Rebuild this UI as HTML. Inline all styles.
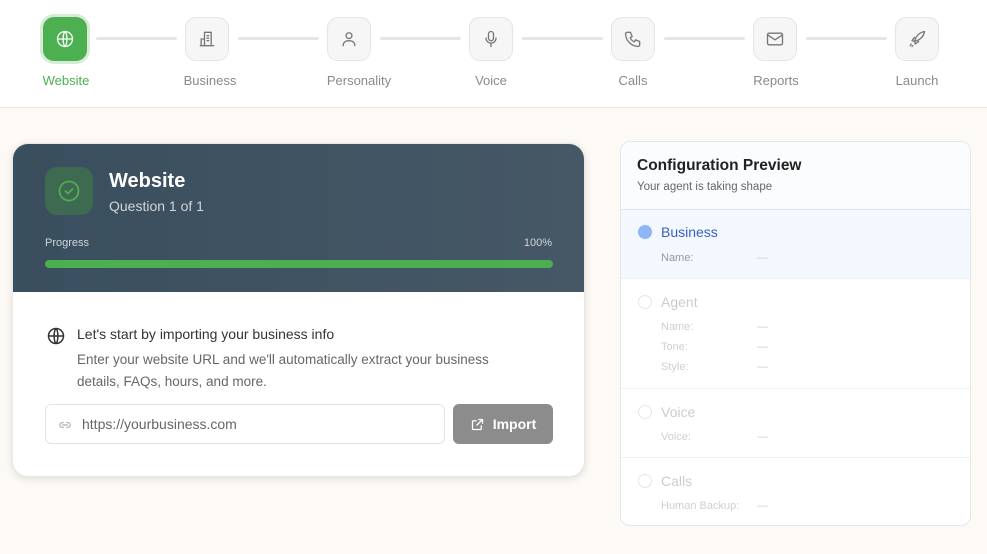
<!DOCTYPE html>
<html><head><meta charset="utf-8"><style>
*{margin:0;padding:0;box-sizing:border-box}
body{width:987px;height:554px;overflow:hidden;background:#fdfaf5;font-family:"Liberation Sans",sans-serif;position:relative}
.top{position:absolute;left:0;top:0;width:987px;height:108px;background:#fff;border-bottom:1px solid #ece9e4}
.st{position:absolute;top:17px;width:44px;height:44px;border-radius:11px;background:#f6f6f6;border:1px solid #e4e4e4;display:flex;align-items:center;justify-content:center}
.st svg{width:20px;height:20px;fill:none;stroke:#777;stroke-width:1.6;stroke-linecap:round;stroke-linejoin:round}
.st.a{background:#4caf50;border:none;box-shadow:0 0 0 3px #d7ecd6}
.st.a svg{stroke:#fff}
.ln{position:absolute;top:37px;height:3px;width:81px;background:#e6e6e6;border-radius:2px}
.lb{position:absolute;top:73px;width:120px;text-align:center;font-size:13px;color:#8a8a8a}
.card{position:absolute;left:12px;top:143px;width:573px;height:334px;border-radius:16px;background:#fff;box-shadow:0 2px 8px rgba(0,0,0,.12);border:1px solid #e8e8e8;overflow:hidden}
.hd{position:absolute;left:0;top:0;width:100%;height:148px;background:linear-gradient(90deg,#394e5e,#465866)}
.rc{position:absolute;left:620px;top:141px;width:351px;height:385px;border:1px solid #e3e6ea;border-radius:10px;background:#fff;overflow:hidden}
.sec{position:absolute;left:0;width:100%;border-top:1px solid #eef0f2}
.dot{position:absolute;left:17px;width:14px;height:14px;border-radius:50%;border:1.5px solid #e6e6e6}
.sn{position:absolute;left:40px;font-size:14px;color:#ccc}
.kv{position:absolute;left:40px;font-size:11px;color:#cfcfcf}
.kv span{position:absolute;left:96px}
</style></head><body>
<div class="top">
<div class="st a" style="left:43px"><svg viewBox="0 0 24 24"><circle cx="12" cy="12" r="9"/><path d="M3 12h18M12 3c3 3 3 15 0 18M12 3c-3 3-3 15 0 18"/></svg></div>
<div class="ln" style="left:96px"></div>
<div class="st" style="left:185px"><svg viewBox="0 0 24 24"><path d="M9 20V4h8v16M5 20v-8h4M4 20h16M12 8h2M12 11h2M12 14h2"/></svg></div>
<div class="ln" style="left:238px"></div>
<div class="st" style="left:327px"><svg viewBox="0 0 24 24"><circle cx="12" cy="8" r="3.5"/><path d="M5 20c0-4 3-6 7-6s7 2 7 6"/></svg></div>
<div class="ln" style="left:380px"></div>
<div class="st" style="left:469px"><svg viewBox="0 0 24 24"><rect x="9" y="3" width="6" height="11" rx="3"/><path d="M6 11a6 6 0 0012 0M12 17v4"/></svg></div>
<div class="ln" style="left:522px"></div>
<div class="st" style="left:611px"><svg viewBox="0 0 24 24"><path d="M5 4h4l2 5-2.5 1.5a11 11 0 005 5L15 13l5 2v4a2 2 0 01-2 2A16 16 0 013 6a2 2 0 012-2"/></svg></div>
<div class="ln" style="left:664px"></div>
<div class="st" style="left:753px"><svg viewBox="0 0 24 24"><rect x="3" y="5" width="18" height="14" rx="2"/><path d="M3 7l9 6 9-6"/></svg></div>
<div class="ln" style="left:806px"></div>
<div class="st" style="left:895px"><svg viewBox="0 0 24 24"><path d="M9 15c2-7 6-11 12-12-1 6-5 10-12 12zM9 15l-3-1 3-4M9 15l1 3 4-3M5 18l-1 2M7 20l-1 1"/></svg></div>
<div class="lb" style="left:6px;color:#4caf50">Website</div>
<div class="lb" style="left:150px">Business</div>
<div class="lb" style="left:299px">Personality</div>
<div class="lb" style="left:431px">Voice</div>
<div class="lb" style="left:573px">Calls</div>
<div class="lb" style="left:716px">Reports</div>
<div class="lb" style="left:857px">Launch</div>
</div>

<div class="card">
<div class="hd">
<div style="position:absolute;left:32px;top:23px;width:48px;height:48px;border-radius:12px;background:#3f6a52;display:flex;align-items:center;justify-content:center"><svg width="24" height="24" viewBox="0 0 24 24" fill="none" stroke="#4caf50" stroke-width="1.8" stroke-linecap="round" stroke-linejoin="round"><circle cx="12" cy="12" r="9.5"/><path d="M8.5 12l2.5 2.5 4.5-4.5"/></svg></div>
<div style="position:absolute;left:96px;top:26px;font-size:20px;font-weight:bold;color:#fff">Website</div>
<div style="position:absolute;left:96px;top:54px;font-size:14px;color:#cfd6dc">Question 1 of 1</div>
<div style="position:absolute;left:32px;top:93px;font-size:11px;color:#d0d6db">Progress</div>
<div style="position:absolute;right:32px;top:93px;font-size:11px;color:#d0d6db">100%</div>
<div style="position:absolute;left:32px;top:116px;width:508px;height:8px;border-radius:4px;background:#4caf50"></div>
</div>
<svg style="position:absolute;left:33px;top:182px" width="20" height="20" viewBox="0 0 24 24" fill="none" stroke="#333" stroke-width="1.8"><circle cx="12" cy="12" r="9"/><path d="M3 12h18M12 3c3 3 3 15 0 18M12 3c-3 3-3 15 0 18"/></svg>
<div style="position:absolute;left:64px;top:182px;font-size:14px;color:#333">Let's start by importing your business info</div>
<div style="position:absolute;left:64px;top:205px;width:440px;font-size:13.5px;line-height:22px;color:#666">Enter your website URL and we'll automatically extract your business details, FAQs, hours, and more.</div>
<div style="position:absolute;left:32px;top:260px;width:400px;height:40px;border:1px solid #e3e3e3;border-radius:6px">
<svg style="position:absolute;left:11px;top:13px" width="16" height="14" viewBox="0 0 24 24" fill="none" stroke="#aaa" stroke-width="2" stroke-linecap="round"><path d="M9 8H7a4 4 0 000 8h2M15 8h2a4 4 0 010 8h-2M8 12h8"/></svg>
<div style="position:absolute;left:36px;top:11px;font-size:14px;color:#666">https://yourbusiness.com</div></div>
<div style="position:absolute;left:440px;top:260px;width:100px;height:40px;border-radius:6px;background:#8c8c8c;color:#fff;font-size:14px;font-weight:bold;display:flex;align-items:center;justify-content:center;gap:8px"><svg width="15" height="15" viewBox="0 0 24 24" fill="none" stroke="#fff" stroke-width="2" stroke-linecap="round"><path d="M14 4h6v6M20 4l-9 9M18 14v5a1 1 0 01-1 1H5a1 1 0 01-1-1V7a1 1 0 011-1h5"/></svg>Import</div>
</div>

<div class="rc">
<div style="position:absolute;left:0;top:0;width:100%;height:67px;background:#fbfcfd"></div>
<div style="position:absolute;left:16px;top:15px;font-size:15.5px;font-weight:bold;color:#222">Configuration Preview</div>
<div style="position:absolute;left:16px;top:39px;font-size:11.5px;color:#666">Your agent is taking shape</div>
<div class="sec" style="top:67px;height:69px;background:#f3f8fe;border-color:#dfe3e8"><div class="dot" style="top:15px;background:#8fb4f8;border-color:#8fb4f8"></div><div class="sn" style="top:14px;color:#3b5fc4">Business</div><div class="kv" style="top:42px;color:#999">Name:<span style="color:#ccc">—</span></div></div>
<div class="sec" style="top:136px;height:110px"><div class="dot" style="top:16px"></div><div class="sn" style="top:15px">Agent</div><div class="kv" style="top:42px">Name:<span>—</span></div><div class="kv" style="top:62px">Tone:<span>—</span></div><div class="kv" style="top:82px">Style:<span>—</span></div></div>
<div class="sec" style="top:246px;height:69px"><div class="dot" style="top:16px"></div><div class="sn" style="top:15px">Voice</div><div class="kv" style="top:42px">Voice:<span>—</span></div></div>
<div class="sec" style="top:315px;height:70px"><div class="dot" style="top:16px"></div><div class="sn" style="top:15px">Calls</div><div class="kv" style="top:42px">Human Backup:<span>—</span></div></div>
</div>
</body></html>
